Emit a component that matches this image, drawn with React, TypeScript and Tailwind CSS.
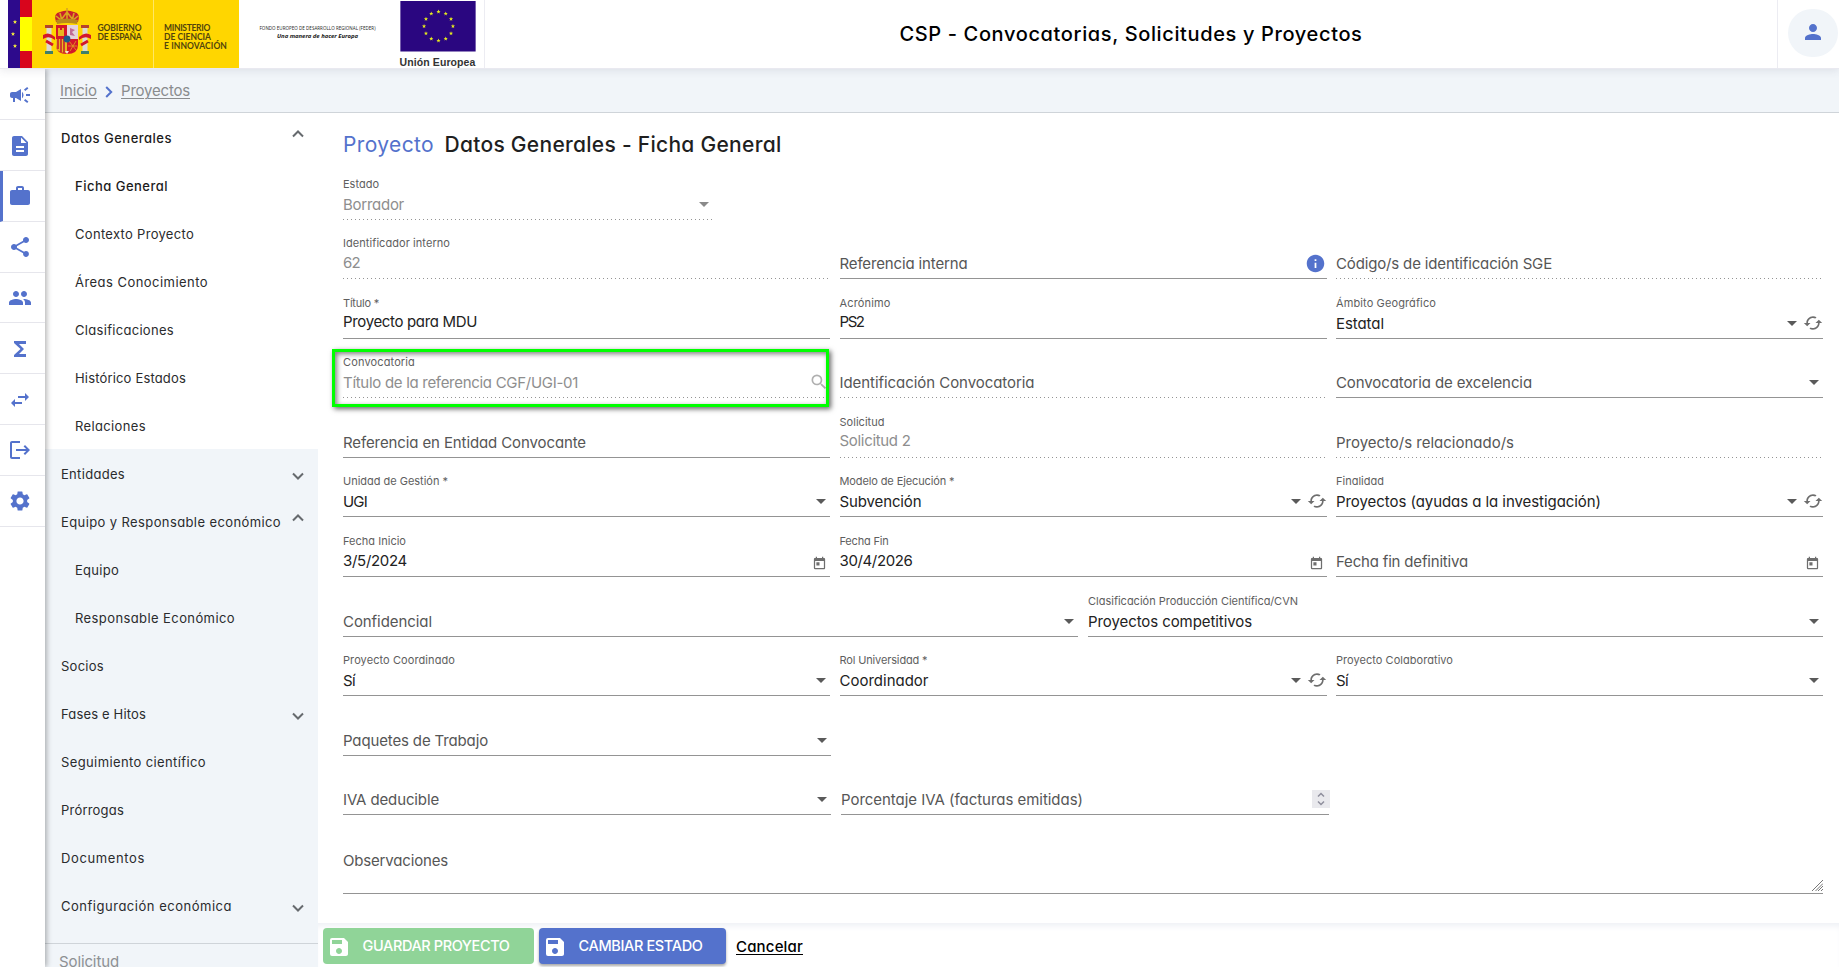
import React, { useLayoutEffect, useRef } from "react";
import {
  MdCampaign, MdDescription, MdWork, MdShare, MdGroup, MdFunctions, MdSwapHoriz, MdLogout,
  MdSettings, MdInfo, MdSearch, MdSave, MdCached, MdToday, MdPerson,
} from "react-icons/md";

/** Text whose tracking is adjusted so that it takes `w` pixels. */
function T({ w, className = "", children }: { w: number; className?: string; children: string }) {
  const ref = useRef<HTMLSpanElement>(null);
  useLayoutEffect(() => {
    const el = ref.current;
    if (!el) return;
    el.style.letterSpacing = "0px";
    const natural = el.getBoundingClientRect().width;
    el.style.letterSpacing = `${(w - natural) / children.length}px`;
  }, [w, children]);
  return (
    <span ref={ref} className={`inline-block whitespace-nowrap ${className}`}>
      {children}
    </span>
  );
}

function Crest() {
  return (
    <svg width="48" height="50" viewBox="0 0 48 50" className="shrink-0">
      <path d="M13 14Q10 5 17 4Q24 1 31 4Q38 5 35 14Z" fill="#c8202c" />
      <path d="M13 8l5 4 6-8 6 8 5-4M24 0v12M17 5l2 8M31 5l-2 8" stroke="#d9a520" strokeWidth="1.6" fill="none" />
      <path d="M13 12Q24 9 35 12L34 16Q24 14 14 16Z" fill="#b98a1c" />
      <path d="M13 17h22v20q0 9-11 9T13 37Z" fill="#d4172a" />
      <path d="M24 17h11v14H24z" fill="#e3d3dc" />
      <path d="M27 20l5 2-3 2 3 4-5-1z" fill="#c06a95" />
      <path d="M15 20h2v2h2v-2h2v8h-6z" fill="#e8b71f" />
      <path d="M13 31h11v14q-11 0-11-8z" fill="#e8b71f" />
      <path d="M15 31v10M18 31v13M21 31v14" stroke="#c8202c" strokeWidth="1.6" />
      <path d="M26 33l7 9M33 33l-6 10M25 38h9" stroke="#e0a51f" strokeWidth=".8" />
      <circle cx="24" cy="31" r="3.4" fill="#1c5a8c" />
      <path d="M22 43h4l-2 3z" fill="#f3e6d0" />
      <path d="M3.500 20h5v23h-5zM39.500 20h5v23h-5z" fill="#dcdad2" />
      <path d="M2 17h8v3H2zM38 17h8v3h-8z" fill="#b5432a" />
      <path d="M0 27q6-4 12 2v3q-6-5-12-1zM48 27q-6-4-12 2v3q6-5 12-1z" fill="#d4172a" />
      <path d="M3 33l7 4M45 33l-7 4" stroke="#d4172a" strokeWidth="3" />
      <path d="M2 43h8v3H2zM38 43h8v3h-8z" fill="#3f7f6a" />
    </svg>
  );
}

const STAR = "M0-2.2L.6-.7 2.100-.7 .9.300 1.300 1.800 0 .9-1.300 1.800-.9.300-2.100-.7-.6-.7Z";

function Header() {
  return (
    <header className="relative z-20 flex h-[69px] shrink-0 items-start border-b border-[#e9e9f0] bg-white shadow-[0_2px_8px_rgba(60,60,90,0.10)]">
      <div className="flex h-[68px] w-[485px] shrink-0 border-r border-[#ececf2] pl-[7.500px]">
        <svg width="24" height="68" viewBox="0 0 24 68" className="shrink-0">
          <rect width="12" height="68" fill="#2d0a8c" />
          <rect x="12" width="12" height="68" fill="#d8051c" />
          <rect x="12" y="17" width="12" height="34" fill="#ffff00" />
          {[[7, 22], [5, 34], [7, 46]].map(([x, y]) => (
            <path key={y} d={STAR} transform={`translate(${x} ${y})`} fill="#f5ee3c" />
          ))}
        </svg>
        <div className="flex h-[68px] w-[207.500px] shrink-0 bg-[#ffd600] font-[Lato] text-[8.500px] leading-[9px] font-bold text-[#51440c]">
          <div className="flex w-[122px] shrink-0 border-r border-[#ffe766] pt-[8px] pl-[11px]">
            <Crest />
            <div className="flex flex-col items-start pt-[16px] pl-[7px]">
              <T w={44}>GOBIERNO</T>
              <T w={44}>DE ESPAÑA</T>
            </div>
          </div>
          <div className="flex flex-col items-start pt-[24px] pl-[10.500px]">
            <T w={46}>MINISTERIO</T>
            <T w={47}>DE CIENCIA</T>
            <T w={63}>E INNOVACIÓN</T>
          </div>
        </div>
        <div className="flex w-[157px] shrink-0 flex-col items-center pt-[24px] font-['Open_Sans'] leading-[8px] text-[#222]">
          <T w={116} className="text-[4.500px]">FONDO EUROPEO DE DESARROLLO REGIONAL (FEDER)</T>
          <T w={81} className="text-[6px] font-bold italic">Una manera de hacer Europa</T>
        </div>
        <div className="flex flex-col items-start pl-[3.500px]">
          <svg width="76" height="51" viewBox="0 0 76 51" className="mt-px">
            <rect width="76" height="51" fill="#2a0680" />
            {Array.from({ length: 12 }, (_, i) => {
              const a = (i * Math.PI) / 6;
              return <path key={i} d={STAR} transform={`translate(${38.5 + 14.600 * Math.sin(a)} ${25.5 - 14.600 * Math.cos(a)})`} fill="#e4ea1e" />;
            })}
          </svg>
          <T w={76} className="mt-[4.500px] font-['Liberation_Sans'] text-[10.500px] leading-[12px] font-bold text-[#333]">Unión Europea</T>
        </div>
      </div>
      <div className="flex h-[68px] flex-1 justify-center pt-[19px] text-[20px] leading-[30px] font-medium text-black">
        <T w={463}>CSP - Convocatorias, Solicitudes y Proyectos</T>
      </div>
      <div className="flex h-[68px] w-[62px] shrink-0 items-center border-l border-[#ececf2] pl-[10px]">
        <div className="mb-[2px] flex h-[48px] w-[50px] shrink-0 items-center justify-center rounded-full bg-[#f1f5f9]">
          <MdPerson className="mb-[2px] size-6 text-[#5472cc]" />
        </div>
      </div>
    </header>
  );
}

const RAIL = [
  { I: MdCampaign }, { I: MdDescription }, { I: MdWork, on: true }, { I: MdShare }, { I: MdGroup },
  { I: MdFunctions }, { I: MdSwapHoriz }, { I: MdLogout }, { I: MdSettings },
];

function Rail() {
  return (
    <nav className="relative z-10 w-[44.500px] shrink-0 bg-white pt-[0.500px] shadow-[2px_0_5px_rgba(0,0,0,0.28)]">
      {RAIL.map(({ I, on }, i) => (
        <div key={i} className={`flex h-[50.800px] items-center border-b border-b-[#e6e6ec] pt-px ${on ? "border-l-[3px] border-l-[#5472cc] pl-[5px]" : "pl-[8px]"}`}>
          <I className="size-6 text-[#5472cc]" />
        </div>
      ))}
    </nav>
  );
}

type Item = { t: string; w: number; sub?: boolean; on?: boolean; c?: "up" | "down" };
const OPEN: Item[] = [
  { t: "Datos Generales", w: 111, on: true, c: "up" },
  { t: "Ficha General", w: 93, on: true, sub: true },
  { t: "Contexto Proyecto", w: 119, sub: true },
  { t: "Áreas Conocimiento", w: 133, sub: true },
  { t: "Clasificaciones", w: 99, sub: true },
  { t: "Histórico Estados", w: 111, sub: true },
  { t: "Relaciones", w: 71, sub: true },
];
const REST: Item[] = [
  { t: "Entidades", w: 64, c: "down" },
  { t: "Equipo y Responsable económico", w: 220, c: "up" },
  { t: "Equipo", w: 44, sub: true },
  { t: "Responsable Económico", w: 160, sub: true },
  { t: "Socios", w: 43 },
  { t: "Fases e Hitos", w: 85, c: "down" },
  { t: "Seguimiento científico", w: 145 },
  { t: "Prórrogas", w: 63 },
  { t: "Documentos", w: 84 },
  { t: "Configuración económica", w: 171, c: "down" },
];

function MenuRow({ t, w, sub, on, c }: Item) {
  return (
    <div className={`flex h-12 items-center justify-between pr-[14px] ${sub ? "pl-[30.500px]" : "pl-[16.500px]"}`}>
      <T w={w} className={`pt-[3px] text-[13px] ${on ? "font-medium text-[#1c1c1c]" : "text-[#2a2b2d]"}`}>{t}</T>
      {c && (
        <svg width="12" height="8" viewBox="0 0 12 8" className={c === "up" ? "mb-[6px]" : "mt-[6px]"}>
          <path d={c === "up" ? "M1 6.500L6 1.500l5 5" : "M1 1.500l5 5 5-5"} fill="none" stroke="#666a6e" strokeWidth="2" />
        </svg>
      )}
    </div>
  );
}

function Sidebar() {
  return (
    <aside className="flex w-[273.500px] shrink-0 flex-col overflow-hidden bg-[#f1f5f9]">
      <div className="bg-white">{OPEN.map((i) => <MenuRow key={i.t} {...i} />)}</div>
      <div>{REST.map((i) => <MenuRow key={i.t} {...i} />)}</div>
      <div className="mt-[14px] flex h-6 shrink-0 items-start border-t border-[#cfd4d9] pt-[10px] pl-[14.500px]">
        <T w={60} className="text-[15px] leading-[15px] text-[#8d9093]">Solicitud</T>
      </div>
    </aside>
  );
}

type Trail = "arrow" | "cached" | "today" | "info" | "search" | "spin";
type FieldProps = {
  label?: string; lw?: number; value?: string; vw?: number; hint?: string; hw?: number;
  off?: boolean; trail?: Trail; className?: string;
};

function Arrow({ off }: { off?: boolean }) {
  return (
    <svg width="10" height="5" viewBox="0 0 10 5" className={`mb-[12px] ${off ? "text-[#8a8a8a]" : "text-[#5a5a5a]"}`}>
      <path d="M0 0h10L5 5z" fill="currentColor" />
    </svg>
  );
}

function Trailing({ kind, off }: { kind: Trail; off?: boolean }) {
  if (kind === "arrow") return <div className="pr-[4px]"><Arrow off={off} /></div>;
  if (kind === "cached")
    return (
      <div className="flex items-end gap-[6px]">
        <Arrow />
        <MdCached className="mb-[5px] size-[20px] text-[#6e6e6e]" />
      </div>
    );
  if (kind === "today") return <MdToday className="mr-[3px] mb-[5px] size-[15px] text-[#6e6e6e]" />;
  if (kind === "info") return <MdInfo className="mr-[1px] mb-[4px] size-[21px] text-[#5472cc]" />;
  if (kind === "search") return <MdSearch className="mr-[1px] mb-[5px] size-[20px] text-[#b0b0b0]" />;
  return (
    <div className="-mr-px mb-[6px] flex h-[18px] w-[18px] items-center justify-center bg-[#e9e9ed]">
      <svg width="8" height="14" viewBox="0 0 8 14">
        <path d="M1 4.500l3-3 3 3M1 9.500l3 3 3-3" fill="none" stroke="#8f8f9d" strokeWidth="1.500" />
      </svg>
    </div>
  );
}

function Field({ label, lw = 0, value, vw = 0, hint, hw = 0, off, trail, className = "" }: FieldProps) {
  const select = trail === "arrow" || trail === "cached";
  return (
    <div className={`flex h-[59.570px] min-w-0 flex-col justify-end ${className}`}>
      {label && <T w={lw} className="self-start text-[11px] leading-[14px] text-[#5e5e5e]">{label}</T>}
      <div className="flex h-[28px] items-end justify-between">
        {hint ? (
          <T w={hw} className="mb-[4px] text-[15px] leading-[20px] text-[#565656]">{hint}</T>
        ) : (
          <T w={vw} className={`text-[15px] leading-[20px] ${select || trail === "search" ? "mb-[4px]" : "mb-[5.500px]"} ${off ? "text-[#8e8e8e]" : "text-[#222]"}`}>{value ?? ""}</T>
        )}
        {trail && <Trailing kind={trail} off={off} />}
      </div>
      {off ? (
        <div className="h-px bg-[repeating-linear-gradient(90deg,#949494_0_1px,transparent_1px_4px)]" />
      ) : (
        <div className="h-px bg-[#949494]" />
      )}
    </div>
  );
}

const three = "grid grid-cols-[487px_487px_487px] gap-[9.500px]";

function Form() {
  return (
    <section className="flex-1 overflow-hidden pt-[18px] pl-[25px]">
      <h1 className="flex h-[28px] items-center gap-[10.500px] text-[21px] font-medium text-[#1f1f1f]">
        <T w={91} className="font-normal text-[#5472cc]">Proyecto</T>
        <T w={337}>Datos Generales - Ficha General</T>
      </h1>
      <div className="mt-[1.100px]">
        <Field label="Estado" lw={36} value="Borrador" vw={61} off trail="arrow" className="w-[369.500px]" />
        <div className={three}>
          <Field label="Identificador interno" lw={107} value="62" vw={17} off />
          <Field hint="Referencia interna" hw={128} trail="info" />
          <Field hint="Código/s de identificación SGE" hw={216} off />
        </div>
        <div className={three}>
          <Field label="Título *" lw={36} value="Proyecto para MDU" vw={134} />
          <Field label="Acrónimo" lw={51} value="PS2" vw={24} />
          <Field label="Ámbito Geográfico" lw={100} value="Estatal" vw={48} trail="cached" />
        </div>
        <div className={three}>
          <div className="relative">
            <Field label="Convocatoria" lw={72} value="Título de la referencia CGF/UGI-01" vw={235} off trail="search" />
            <div className="absolute top-[10px] -left-[11px] h-[58.500px] w-[497px] border-[3px] border-[#00ff00] shadow-[2px_2px_5px_rgba(0,0,0,0.6),inset_2px_2px_5px_rgba(0,0,0,0.5)]" />
          </div>
          <Field hint="Identificación Convocatoria" hw={195} off />
          <Field hint="Convocatoria de excelencia" hw={196} trail="arrow" />
        </div>
        <div className={three}>
          <Field hint="Referencia en Entidad Convocante" hw={243} />
          <Field label="Solicitud" lw={45} value="Solicitud 2" vw={71} off />
          <Field hint="Proyecto/s relacionado/s" hw={178} off />
        </div>
        <div className={three}>
          <Field label="Unidad de Gestión *" lw={105} value="UGI" vw={24} trail="arrow" />
          <Field label="Modelo de Ejecución *" lw={115} value="Subvención" vw={82} trail="cached" />
          <Field label="Finalidad" lw={48} value="Proyectos (ayudas a la investigación)" vw={265} trail="cached" />
        </div>
        <div className={three}>
          <Field label="Fecha Inicio" lw={63} value="3/5/2024" vw={64} trail="today" />
          <Field label="Fecha Fin" lw={49} value="30/4/2026" vw={73} trail="today" />
          <Field hint="Fecha fin definitiva" hw={132} trail="today" />
        </div>
        <div className="grid grid-cols-[735px_735px] gap-[10px]">
          <Field hint="Confidencial" hw={89} trail="arrow" />
          <Field label="Clasificación Producción Científica/CVN" lw={210} value="Proyectos competitivos" vw={164} trail="arrow" />
        </div>
        <div className={three}>
          <Field label="Proyecto Coordinado" lw={112} value="Sí" vw={12} trail="arrow" />
          <Field label="Rol Universidad *" lw={88} value="Coordinador" vw={89} trail="cached" />
          <Field label="Proyecto Colaborativo" lw={117} value="Sí" vw={12} trail="arrow" />
        </div>
        <Field hint="Paquetes de Trabajo" hw={145} trail="arrow" className="w-[488px]" />
        <div className="grid grid-cols-[488px_488px] gap-[10px]">
          <Field hint="IVA deducible" hw={96} trail="arrow" />
          <Field hint="Porcentaje IVA (facturas emitidas)" hw={242} trail="spin" />
        </div>
        <div className="flex h-[78.500px] w-[1480px] items-end justify-between border-b border-[#949494]">
          <T w={105} className="mb-[22px] text-[15px] leading-[20px] text-[#565656]">Observaciones</T>
          <svg width="11" height="11" viewBox="0 0 11 11" className="mb-[2px]">
            <path d="M0 11L11 0M3.500 11L11 3.500M6 11l5-5M9 11l2-2" stroke="#777" strokeWidth="1" />
          </svg>
        </div>
      </div>
    </section>
  );
}

function Actions() {
  return (
    <footer className="flex h-[44px] shrink-0 items-start bg-white pt-[5px] pl-[4.500px] font-medium text-white shadow-[inset_0_6px_6px_-3px_#eef0f5]">
      <button className="flex h-[36px] w-[211px] items-center gap-[12px] rounded-[4px] bg-[#90d498] pl-[4px]">
        <MdSave className="mt-[2px] size-6" />
        <T w={147} className="text-[14.500px]">GUARDAR PROYECTO</T>
      </button>
      <button className="ml-[5px] flex h-[36px] w-[187px] items-center gap-[12px] rounded-[4px] bg-[#5472cc] pl-[4px] shadow-[0_2px_3px_rgba(0,0,0,0.35)]">
        <MdSave className="mt-[2px] size-6" />
        <T w={124} className="text-[14.500px]">CAMBIAR ESTADO</T>
      </button>
      <a className="ml-[10.500px] leading-[37px] text-black">
        <T w={67} className="text-[15px] underline decoration-1 underline-offset-2">Cancelar</T>
      </a>
    </footer>
  );
}

export default function App() {
  return (
    <div className="flex h-[967px] w-[1839px] flex-col overflow-hidden bg-white font-[Inter,sans-serif] [font-feature-settings:'cv11']">
      <Header />
      <div className="flex min-h-0 flex-1">
        <Rail />
        <div className="flex min-w-0 flex-1 flex-col">
          <div className="flex h-[44px] shrink-0 items-center border-b border-[#cfd4d9] bg-[#f1f5f9] pt-[2px] pl-[15.500px] text-[15px] text-[#8a8c8e]">
            <T w={37} className="underline decoration-1 underline-offset-2">Inicio</T>
            <svg width="8" height="12" viewBox="0 0 8 12" className="mr-[8px] ml-[8px]">
              <path d="M1.200 1L6.200 6l-5 5" fill="none" stroke="#5472cc" strokeWidth="2" />
            </svg>
            <T w={69} className="underline decoration-1 underline-offset-2">Proyectos</T>
          </div>
          <div className="flex min-h-0 flex-1">
            <Sidebar />
            <main className="flex min-w-0 flex-1 flex-col bg-white">
              <Form />
              <Actions />
            </main>
          </div>
        </div>
      </div>
    </div>
  );
}
